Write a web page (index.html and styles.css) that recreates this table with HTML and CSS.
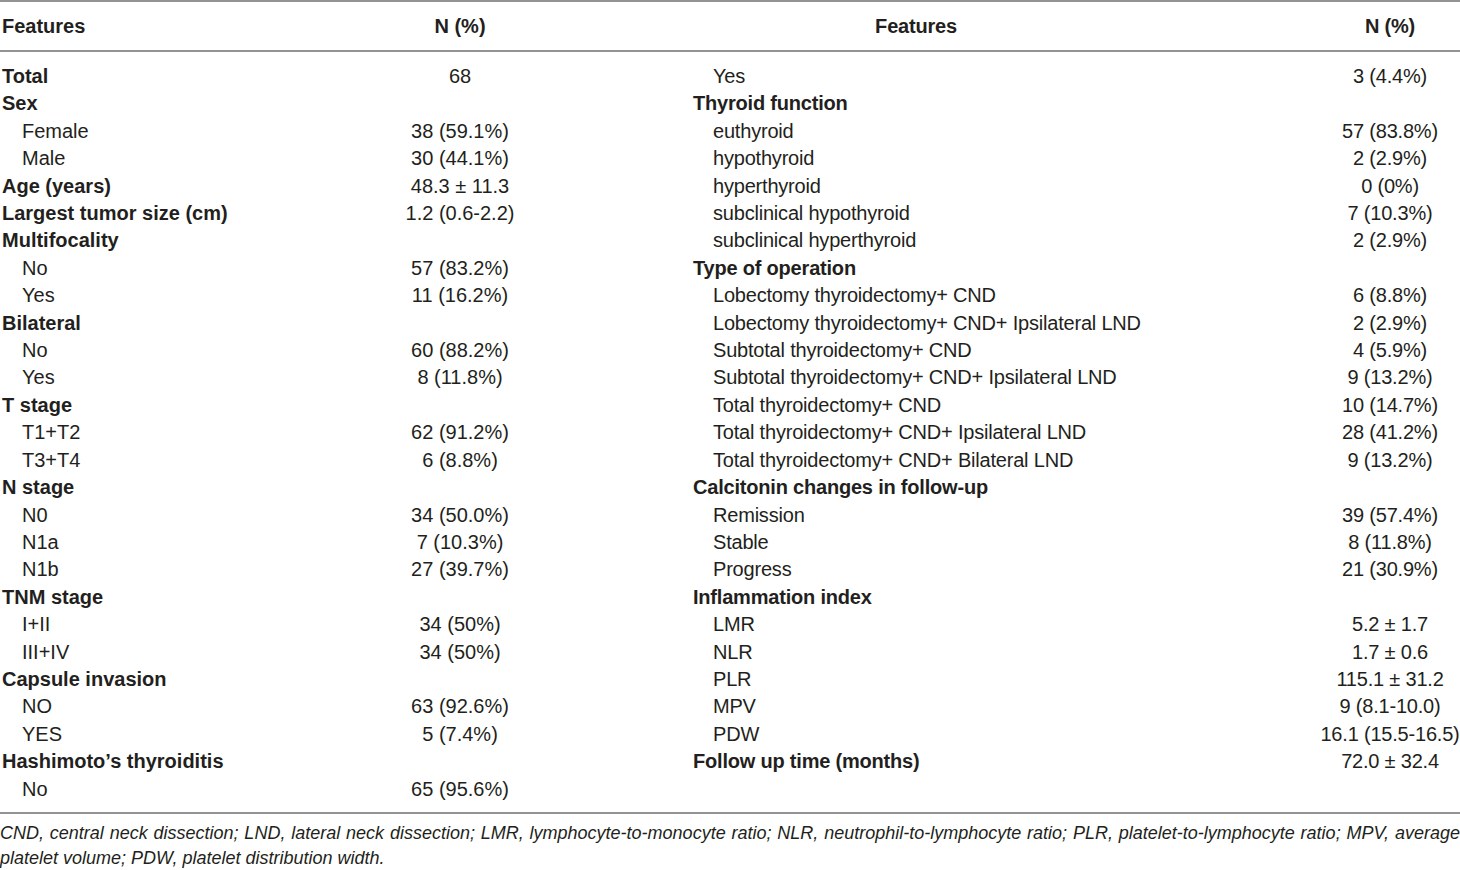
FILE: index.html
```html
<!DOCTYPE html>
<html>
<head>
<meta charset="utf-8">
<link rel="stylesheet" href="styles.css">
</head>
<body>
<div class="table">
  <div class="head">
    <div class="half left">
      <div class="cell feat hfeat">Features</div>
      <div class="cell val">N (%)</div>
    </div>
    <div class="half right">
      <div class="cell feat hfeat-r">Features</div>
      <div class="cell val">N (%)</div>
    </div>
  </div>
  <div class="body">
    <div class="half left">
      <div class="cell feat b">Total</div><div class="cell val">68</div>
      <div class="cell feat b">Sex</div><div class="cell val"></div>
      <div class="cell feat in">Female</div><div class="cell val">38 (59.1%)</div>
      <div class="cell feat in">Male</div><div class="cell val">30 (44.1%)</div>
      <div class="cell feat b">Age (years)</div><div class="cell val">48.3 ± 11.3</div>
      <div class="cell feat b">Largest tumor size (cm)</div><div class="cell val">1.2 (0.6-2.2)</div>
      <div class="cell feat b">Multifocality</div><div class="cell val"></div>
      <div class="cell feat in">No</div><div class="cell val">57 (83.2%)</div>
      <div class="cell feat in">Yes</div><div class="cell val">11 (16.2%)</div>
      <div class="cell feat b">Bilateral</div><div class="cell val"></div>
      <div class="cell feat in">No</div><div class="cell val">60 (88.2%)</div>
      <div class="cell feat in">Yes</div><div class="cell val">8 (11.8%)</div>
      <div class="cell feat b">T stage</div><div class="cell val"></div>
      <div class="cell feat in">T1+T2</div><div class="cell val">62 (91.2%)</div>
      <div class="cell feat in">T3+T4</div><div class="cell val">6 (8.8%)</div>
      <div class="cell feat b">N stage</div><div class="cell val"></div>
      <div class="cell feat in">N0</div><div class="cell val">34 (50.0%)</div>
      <div class="cell feat in">N1a</div><div class="cell val">7 (10.3%)</div>
      <div class="cell feat in">N1b</div><div class="cell val">27 (39.7%)</div>
      <div class="cell feat b">TNM stage</div><div class="cell val"></div>
      <div class="cell feat in">I+II</div><div class="cell val">34 (50%)</div>
      <div class="cell feat in">III+IV</div><div class="cell val">34 (50%)</div>
      <div class="cell feat b">Capsule invasion</div><div class="cell val"></div>
      <div class="cell feat in">NO</div><div class="cell val">63 (92.6%)</div>
      <div class="cell feat in">YES</div><div class="cell val">5 (7.4%)</div>
      <div class="cell feat b">Hashimoto’s thyroiditis</div><div class="cell val"></div>
      <div class="cell feat in">No</div><div class="cell val">65 (95.6%)</div>
    </div>
    <div class="half right">
      <div class="cell feat in">Yes</div><div class="cell val">3 (4.4%)</div>
      <div class="cell feat b">Thyroid function</div><div class="cell val"></div>
      <div class="cell feat in">euthyroid</div><div class="cell val">57 (83.8%)</div>
      <div class="cell feat in">hypothyroid</div><div class="cell val">2 (2.9%)</div>
      <div class="cell feat in">hyperthyroid</div><div class="cell val">0 (0%)</div>
      <div class="cell feat in">subclinical hypothyroid</div><div class="cell val">7 (10.3%)</div>
      <div class="cell feat in">subclinical hyperthyroid</div><div class="cell val">2 (2.9%)</div>
      <div class="cell feat b">Type of operation</div><div class="cell val"></div>
      <div class="cell feat in">Lobectomy thyroidectomy+ CND</div><div class="cell val">6 (8.8%)</div>
      <div class="cell feat in">Lobectomy thyroidectomy+ CND+ Ipsilateral LND</div><div class="cell val">2 (2.9%)</div>
      <div class="cell feat in">Subtotal thyroidectomy+ CND</div><div class="cell val">4 (5.9%)</div>
      <div class="cell feat in">Subtotal thyroidectomy+ CND+ Ipsilateral LND</div><div class="cell val">9 (13.2%)</div>
      <div class="cell feat in">Total thyroidectomy+ CND</div><div class="cell val">10 (14.7%)</div>
      <div class="cell feat in">Total thyroidectomy+ CND+ Ipsilateral LND</div><div class="cell val">28 (41.2%)</div>
      <div class="cell feat in">Total thyroidectomy+ CND+ Bilateral LND</div><div class="cell val">9 (13.2%)</div>
      <div class="cell feat b">Calcitonin changes in follow-up</div><div class="cell val"></div>
      <div class="cell feat in">Remission</div><div class="cell val">39 (57.4%)</div>
      <div class="cell feat in">Stable</div><div class="cell val">8 (11.8%)</div>
      <div class="cell feat in">Progress</div><div class="cell val">21 (30.9%)</div>
      <div class="cell feat b">Inflammation index</div><div class="cell val"></div>
      <div class="cell feat in">LMR</div><div class="cell val">5.2 ± 1.7</div>
      <div class="cell feat in">NLR</div><div class="cell val">1.7 ± 0.6</div>
      <div class="cell feat in">PLR</div><div class="cell val">115.1 ± 31.2</div>
      <div class="cell feat in">MPV</div><div class="cell val">9 (8.1-10.0)</div>
      <div class="cell feat in">PDW</div><div class="cell val">16.1 (15.5-16.5)</div>
      <div class="cell feat b">Follow up time (months)</div><div class="cell val">72.0 ± 32.4</div>
      <div class="cell feat"></div><div class="cell val"></div>
    </div>
  </div>
</div>
<p class="note">CND, central neck dissection; LND, lateral neck dissection; LMR, lymphocyte-to-monocyte ratio; NLR, neutrophil-to-lymphocyte ratio; PLR, platelet-to-lymphocyte ratio; MPV, average platelet volume; PDW, platelet distribution width.</p>
</body>
</html>
```
FILE: styles.css
```css
html, body {
  margin: 0;
  padding: 0;
  background: #ffffff;
}
body {
  width: 1460px;
  height: 870px;
  overflow: hidden;
  font-family: "Liberation Sans", Arial, sans-serif;
  color: #231f20;
  font-size: 20px;
}
.table {
  width: 1460px;
}
.head {
  display: flex;
  border-top: 2px solid #939393;
  border-bottom: 2px solid #939393;
  height: 48px;
  font-weight: bold;
}
.head .cell {
  height: 48px;
  line-height: 48px;
}
.body {
  display: flex;
  padding-top: 11px;
  padding-bottom: 9px;
  border-bottom: 2px solid #939393;
}
.half {
  display: grid;
  grid-auto-rows: 27.42px;
  align-content: start;
}
.left {
  width: 690px;
  grid-template-columns: 370px 180px;
}
.right {
  width: 770px;
  grid-template-columns: 630px 140px;
  letter-spacing: -0.2px;
}
.cell {
  white-space: nowrap;
  line-height: 27.42px;
}
.left .feat {
  padding-left: 2px;
}
.right .feat {
  padding-left: 3px;
}
.left .feat.in {
  padding-left: 22px;
}
.right .feat.in {
  padding-left: 23px;
}
.b {
  font-weight: bold;
}
.val {
  display: flex;
  justify-content: center;
}
.head .hfeat-r {
  padding-left: 0;
  padding-right: 178px;
  text-align: center;
}
.note {
  margin: 0;
  padding-top: 7px;
  font-style: italic;
  font-size: 18px;
  line-height: 25px;
  text-align: justify;
}
```
